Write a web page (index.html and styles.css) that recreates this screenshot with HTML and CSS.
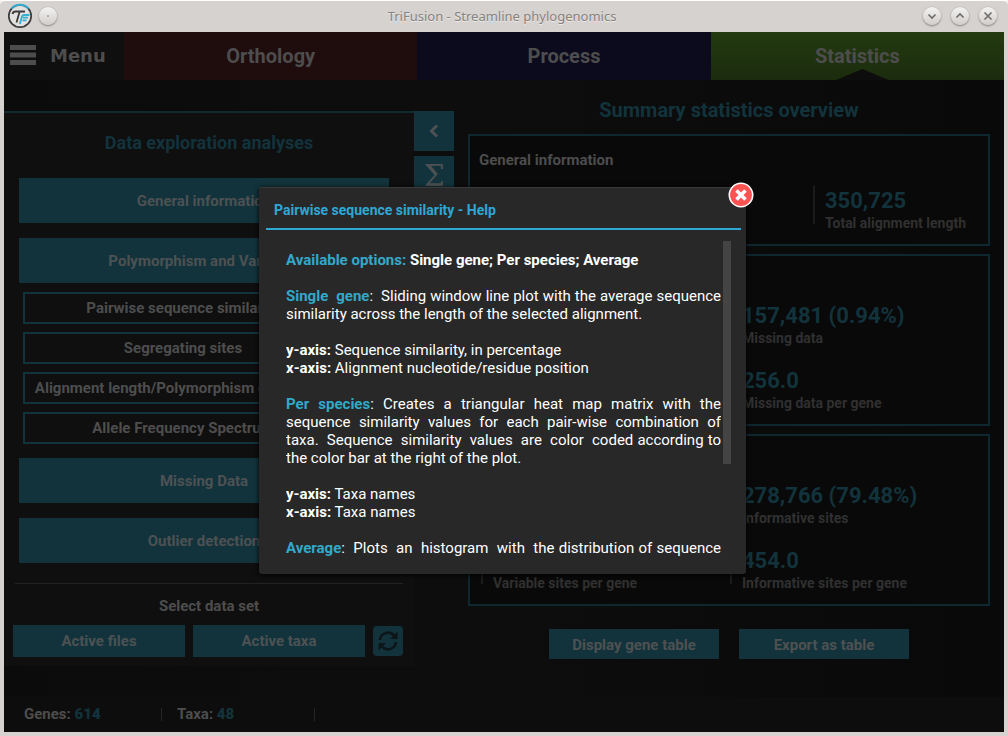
FILE: index.html
```html
<!DOCTYPE html>
<html lang="en">
<head>
<meta charset="utf-8">
<title>TriFusion - Streamline phylogenomics</title>
<link rel="stylesheet" href="styles.css">
</head>
<body>
<div class="window">
  <header class="titlebar">
    <div class="titlebar-side">
      <svg class="logo" width="26" height="26" viewBox="0 0 26 26" aria-hidden="true">
        <circle cx="13" cy="13" r="11.2" fill="#e4e2e0" stroke="#3c3c3e" stroke-width="1.7"/>
        <path d="M4.6 5.6A11.2 11.2 0 0 1 21.400 5.600" fill="none" stroke="#33b0d3" stroke-width="2"/>
        <path d="M5.500 11Q6 8.500 8.500 8.500H18M12.500 9L9.500 19.500" fill="none" stroke="#3c3c3e" stroke-width="1.800"/>
        <path d="M22.500 12H17Q15.500 12 15 13.500L12.800 21M21 14.700H16M19.500 17.300H15.500" fill="none" stroke="#33b0d3" stroke-width="1.800"/>
      </svg>
      <button class="wbtn" aria-label="Window menu"><svg width="18" height="18" viewBox="0 0 18 18"><circle class="dot" cx="9" cy="9" r="1"/></svg></button>
    </div>
    <h1 class="window-title">TriFusion - Streamline phylogenomics</h1>
    <div class="titlebar-side titlebar-end">
      <button class="wbtn" aria-label="Minimize"><svg width="18" height="18" viewBox="0 0 18 18"><path d="M5.500 7.500L9 11L12.500 7.500"/></svg></button>
      <button class="wbtn" aria-label="Maximize"><svg width="18" height="18" viewBox="0 0 18 18"><path d="M5.500 10.500L9 7L12.500 10.500"/></svg></button>
      <button class="wbtn" aria-label="Close window"><svg width="18" height="18" viewBox="0 0 18 18"><path d="M5.500 5.500L12.500 12.500M12.500 5.500L5.500 12.500"/></svg></button>
    </div>
  </header>

  <div class="app">
    <nav class="nav">
      <button class="menu"><svg width="26" height="20" viewBox="0 0 26 20" aria-hidden="true"><path d="M0 0h26v5H0zM0 7.500h26v5H0zM0 15h26v5H0z" fill="#4d4d4d"/></svg>Menu</button>
      <button class="tab tab-orthology">Orthology</button>
      <button class="tab tab-process">Process</button>
      <button class="tab tab-statistics">Statistics</button>
    </nav>

    <main class="main">
      <section class="panel">
        <h2 class="panel-title">Data exploration analyses</h2>
        <div class="analyses">
          <button class="fill group">General information</button>
          <button class="fill group">Polymorphism and Variation</button>
          <div class="sub">
            <button class="outline">Pairwise sequence similarity</button>
            <button class="outline">Segregating sites</button>
            <button class="outline">Alignment length/Polymorphism correlation</button>
            <button class="outline">Allele Frequency Spectrum</button>
          </div>
          <button class="fill group">Missing Data</button>
          <button class="fill group">Outlier detection</button>
        </div>
        <div class="dataset">
          <h3 class="dataset-title">Select data set</h3>
          <div class="dataset-row">
            <button class="fill choice">Active files</button>
            <button class="fill choice">Active taxa</button>
            <button class="refresh" aria-label="Refresh"><svg width="22" height="22" viewBox="0 0 22 22"><path d="M3 10A8 8 0 0 1 17 5.500M19 12A8 8 0 0 1 5 16.500" fill="none" stroke="#0c1518" stroke-width="2.600"/><path d="M20.500 1.500V9H13zM1.500 20.500V13H9z" fill="#0c1518"/></svg></button>
          </div>
        </div>
      </section>

      <div class="rail">
        <button class="fill tool" aria-label="Collapse"><svg width="14" height="14" viewBox="0 0 14 14"><path d="M10 1.500L4.500 7L10 12.500" fill="none" stroke="#4d5153" stroke-width="3"/></svg></button>
        <button class="fill tool sigma">Σ</button>
      </div>

      <section class="summary">
        <h2 class="summary-title">Summary statistics overview</h2>
        <div class="cards">
          <article class="card">
            <h3 class="card-title">General information</h3>
            <div class="stats three">
              <div class="stat end"><strong>350,725</strong><span>Total alignment length</span></div>
            </div>
          </article>
          <article class="card tall">
            <div class="stats">
              <div class="stat end"><strong>157,481 (0.94%)</strong><span>Missing data</span></div>
              <div class="stat end"><strong>256.0</strong><span>Missing data per gene</span></div>
            </div>
          </article>
          <article class="card tall">
            <div class="stats">
              <div class="stat end"><strong>278,766 (79.48%)</strong><span>Informative sites</span></div>
              <div class="stat label-only"><span>Variable sites per gene</span></div>
              <div class="stat"><strong>454.0</strong><span>Informative sites per gene</span></div>
            </div>
          </article>
        </div>
        <div class="actions">
          <button class="fill action">Display gene table</button>
          <button class="fill action">Export as table</button>
        </div>
      </section>
    </main>

    <footer class="status">
      <div class="status-item">Genes: <b>614</b></div>
      <div class="status-item">Taxa: <b>48</b></div>
    </footer>

    <div class="overlay">
      <div class="dialog" role="dialog" aria-labelledby="help-title">
        <button class="close" aria-label="Close help"><svg width="26" height="26" viewBox="0 0 26 26"><circle cx="13" cy="13" r="11.700" fill="#ff5252" stroke="#fff" stroke-width="1.600"/><path d="M8.500 8.500L17.500 17.500M17.500 8.500L8.500 17.500" stroke="#fff" stroke-width="3.600"/></svg></button>
        <h2 class="dialog-title" id="help-title">Pairwise sequence similarity - Help</h2>
        <div class="dialog-body">
          <div class="help">
            <p><b><em>Available options:</em> Single gene; Per species; Average</b></p>
            <p><span class="line"><b><em>Single  gene</em></b>:  Sliding window line plot with the average sequence</span>
              <span>similarity across the length of the selected alignment.</span></p>
            <p><b>y-axis:</b> Sequence similarity, in percentage<br><b>x-axis:</b> Alignment nucleotide/residue position</p>
            <p><span class="line"><b><em>Per  species</em></b>:  Creates  a  triangular  heat  map  matrix  with  the</span>
              <span class="line">sequence  similarity  values  for  each  pair-wise  combination  of</span>
              <span class="line">taxa.  Sequence  similarity  values  are  color  coded according to</span>
              <span>the color bar at the right of the plot.</span></p>
            <p><b>y-axis:</b> Taxa names<br><b>x-axis:</b> Taxa names</p>
            <p><span class="line"><b><em>Average</em></b>:  Plots  an  histogram  with  the distribution of sequence</span></p>
          </div>
          <div class="scrollbar"><div class="thumb"></div></div>
        </div>
      </div>
    </div>
  </div>
</div>
</body>
</html>
```
FILE: styles.css
```css
* { box-sizing: border-box; }
body { margin: 0; background: #f4f4f4; font-family: Roboto, "Liberation Sans", sans-serif; color: #4d4d4d; }
h1, h2, h3, p { margin: 0; }
button { margin: 0; padding: 0; border: 0; background: none; font: inherit; color: inherit; }

.window { display: flex; flex-direction: column; min-height: 100vh; padding: 0 4px 4px; background: #d6d2cf; border-top: 1px solid #fff; border-radius: 5px 5px 0 0; }
.titlebar { display: flex; align-items: center; height: 31px; padding: 0 7px 1px 3px; }
.titlebar-side { display: flex; align-items: center; gap: 6px; flex: 1; }
.titlebar-end { justify-content: flex-end; gap: 10px; }
.window-title { font: 400 13px/18px "Noto Sans", sans-serif; color: #858280; text-shadow: 0 1px 0 #eceae8; }
.wbtn { width: 18px; height: 18px; border-radius: 50%; background: linear-gradient(#f4f3f2, #d0cdca); box-shadow: 0 0 1px 0 #a8a5a2, 0 1px 2px 0 #7f7c79; }
.wbtn svg { display: block; fill: none; stroke: #6e6b69; stroke-width: 1.6; }
.wbtn .dot { fill: #a09d9b; stroke: none; }
.logo { display: block; }

.app { position: relative; flex: 1; display: flex; flex-direction: column; background: linear-gradient(90deg, #0b0b0b, #0d0d0d 45%, #090909); }
.nav { display: grid; grid-template-columns: 120px 1fr 1fr 1fr; height: 48px; font-size: 20px; font-weight: 700; }
.menu { display: flex; align-items: center; gap: 14px; padding: 0 0 2px 6px; background: #0f0f0f; font: 700 18px "DejaVu Sans", sans-serif; }
.tab-orthology { background: #1f0c0d; }
.tab-process { background: #0c0b1d; }
.tab-statistics { background: linear-gradient(#233a10, #1b2c0e); position: relative; }
.tab-statistics::after { content: ""; position: absolute; left: 50%; bottom: 0; width: 52px; height: 11px; margin-left: -21px; background: #0d0d0d; clip-path: polygon(50% 0, 100% 100%, 0 100%); }

.main { flex: 1; display: flex; align-items: flex-start; }
.panel { width: 410px; margin-top: 31px; padding: 18px 9px 9px; border-top: 2px solid #102a31; background: #0f0f0f; }
.panel-title { font-size: 18px; line-height: 24px; color: #12333c; text-align: center; }
.analyses { display: flex; flex-direction: column; gap: 15px; margin-top: 23px; padding: 0 16px 0 6px; }
.fill { background: #12333b; color: #4d5153; font-size: 15px; font-weight: 700; }
.group { height: 45px; }
.sub { display: flex; flex-direction: column; gap: 8px; margin: -6px 0 -1px; padding: 0 46px 0 4px; }
.outline { height: 32px; border: 2px solid #12333b; font-size: 15px; font-weight: 700; white-space: nowrap; }
.dataset { margin: 20px 0 0; padding-top: 12px; position: relative; }
.dataset::before { content: ""; position: absolute; top: 0; left: 2px; right: 2px; height: 1px; background: #222; }
.dataset-title { font-size: 15px; line-height: 22px; text-align: center; }
.dataset-row { display: flex; align-items: center; gap: 8px; margin-top: 8px; }
.choice { width: 172px; height: 32px; }
.refresh { display: grid; place-items: center; width: 30px; height: 30px; border-radius: 4px; background: #12333b; }

.rail { display: flex; flex-direction: column; gap: 5px; margin-top: 31px; width: 40px; }
.tool { display: grid; place-items: center; height: 40px; }
.sigma { font: 700 30px/38px "DejaVu Serif", serif; font-weight: 400; }

.summary { flex: 1; padding: 18px 14px 0; }
.summary-title { font-size: 20px; line-height: 24px; color: #12333c; text-align: center; }
.cards { display: flex; flex-direction: column; gap: 8px; margin-top: 12px; }
.card { display: flex; flex-direction: column; height: 112px; padding: 14px 9px 20px; border: 2px solid #0e282f; background: #090909; }
.card-title { font-size: 15px; line-height: 20px; }
.tall { height: 172px; }
.stats { display: grid; grid-template-columns: 1fr 1fr; row-gap: 27px; margin-top: auto; padding-left: 2px; }
.three { grid-template-columns: 1fr 1fr 1fr; }
.stat { display: flex; flex-direction: column; height: 38px; padding-left: 10px; border-left: 2px solid #1c1c1c; white-space: nowrap; }
.end { grid-column-end: -1; }
.label-only { padding-top: 30px; }
.stat strong { font-size: 22px; line-height: 30px; color: #12333c; }
.stat span { font-size: 14px; line-height: 14px; font-weight: 700; color: #303030; }
.actions { display: flex; justify-content: center; gap: 20px; margin-top: 23px; }
.action { width: 170px; height: 30px; padding-top: 1px; }

.status { display: flex; align-items: center; height: 35px; padding-left: 20px; background: #0d0d0d; font-size: 15px; font-weight: 700; }
.status-item { width: 138px; height: 13px; line-height: 13px; border-right: 1px solid #262626; }
.status-item + .status-item { margin-left: 15px; }
.status-item b { color: #12333c; }

.overlay { position: absolute; inset: 0; display: grid; place-items: center; padding: 0 3px 3px 0; }
.dialog { position: relative; display: flex; flex-direction: column; width: 487px; height: 387px; padding: 11px 5px 14px 7px; border-radius: 3px; border-top: 1px solid #3a3a3a; background: #282828; box-shadow: 0 1px 5px #000; }
.dialog-title { padding: 0 8px 7px; border-bottom: 2px solid #2fa7d4; font-size: 14px; line-height: 22px; color: #2fa7d4; }
.close { position: absolute; top: -6px; right: -8px; }
.close svg { display: block; }
.dialog-body { flex: 1; min-height: 0; display: flex; gap: 2px; margin: 11px 10px 0 20px; }
.help { flex: 1; min-width: 0; overflow: hidden; padding-top: 10px; color: #fff; font-size: 15px; line-height: 18px; }
.help p + p { margin-top: 18px; }
.help span { display: block; white-space: pre; }
.help .line { text-align: justify; text-align-last: justify; }
.help em { font-style: normal; color: #33a9c9; }
.scrollbar { width: 8px; }
.thumb { height: 223px; background: #444; }
```
